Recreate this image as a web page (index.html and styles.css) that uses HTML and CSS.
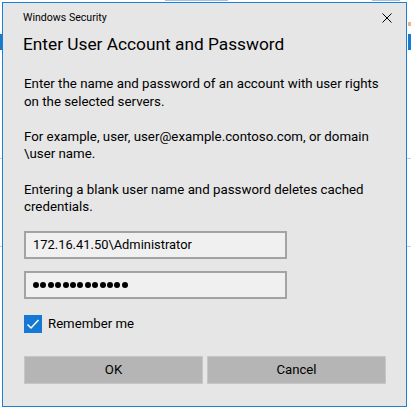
FILE: index.html
```html
<!DOCTYPE html>
<html lang="en">
<head>
    <meta charset="UTF-8">
    <meta name="viewport" content="width=device-width, initial-scale=1.0">
    <title>Windows Security</title>
    <link rel="stylesheet" href="styles.css">
</head>
<body>
    <!-- bits of the window behind the dialog -->
    <div class="backdrop">
        <span class="bg-link bg-link-a"></span>
        <span class="bg-link bg-link-b"></span>
        <span class="bg-block bg-block-left"></span>
        <span class="bg-mark bg-mark-right"></span>
        <span class="bg-block bg-block-right"></span>
        <span class="bg-rule bg-rule-1"></span>
        <span class="bg-rule bg-rule-2"></span>
    </div>

    <div class="dialog">
        <div class="titlebar">
            <span class="titlebar-text">Windows Security</span>
            <button class="close-btn" aria-label="Close">
                <svg width="10" height="10" viewBox="0 0 10 10">
                    <path d="M0.5 0.5 L9.5 9.5 M9.5 0.5 L0.5 9.5" stroke="#000" stroke-width="1" fill="none"/>
                </svg>
            </button>
        </div>

        <div class="dialog-body">
            <h1 class="dialog-title">Enter User Account and Password</h1>

            <p>Enter the name and password of an account with user rights on the selected servers.</p>
            <p>For example, user, user@example.contoso.com, or domain \user name.</p>
            <p class="last">Entering a blank user name and password deletes cached credentials.</p>

            <input class="field" type="text" value="172.16.41.50\Administrator">
            <div class="field password">
                <span class="dot"></span><span class="dot"></span><span class="dot"></span>
                <span class="dot"></span><span class="dot"></span><span class="dot"></span>
                <span class="dot"></span><span class="dot"></span><span class="dot"></span>
                <span class="dot"></span><span class="dot"></span><span class="dot"></span>
                <span class="dot"></span>
            </div>

            <label class="remember">
                <span class="checkbox">
                    <svg width="18" height="18" viewBox="0 0 18 18">
                        <path d="M3.5 9.5 L7 13 L14.5 5" stroke="#fff" stroke-width="1.5" fill="none"/>
                    </svg>
                </span>
                Remember me
            </label>

            <div class="buttons">
                <button class="btn">OK</button>
                <button class="btn">Cancel</button>
            </div>
        </div>
    </div>
</body>
</html>
```
FILE: styles.css
```css
body {
    margin: 0;
    background: #fff;
    font-family: Roboto, "Noto Sans", sans-serif;
    color: #000;
    position: relative;
}

/* background window */
.backdrop span {
    position: absolute;
    display: block;
}

.bg-link {
    top: 0;
    height: 1px;
    background: #9cc3ea;
}

.bg-link-a { left: 165px; width: 63px; }
.bg-link-b { left: 372px; width: 28px; }

.bg-block {
    top: 34px;
    height: 16px;
    background: #1979ca;
}

.bg-block-left { left: 0; width: 2px; }
.bg-block-right { left: 408px; width: 3px; }

.bg-mark-right {
    left: 408px;
    top: 22px;
    width: 3px;
    height: 4px;
    background: #e9b77a;
}

.bg-rule {
    left: 0;
    width: 411px;
    height: 1px;
    background: #cfcfcf;
}

.bg-rule-1 { top: 158px; }
.bg-rule-2 { top: 246px; }

/* dialog */
.dialog {
    position: relative;
    margin: 2px 0 0 2px;
    width: 403px;
    border: 1px solid #1a7fd6;
    background: #e6e6e6;
}

.titlebar {
    display: flex;
    justify-content: space-between;
    align-items: center;
    height: 28px;
    padding: 0 14px 0 20px;
}

.titlebar-text {
    font-size: 10.6px;
}

.close-btn {
    background: none;
    border: none;
    padding: 0;
    width: 10px;
    height: 10px;
    display: flex;
    margin-top: 1px;
}

.dialog-body {
    padding: 0 20px 22px 21px;
}

.dialog-title {
    margin: 1px 0 0 -1px;
    font-size: 17.3px;
    font-weight: normal;
    line-height: 24px;
}

.dialog-body p {
    margin: 0 0 17.6px;
    font-size: 13.3px;
    line-height: 17.6px;
}

.dialog-title + p {
    margin-top: 19px;
}

.dialog-body p.last {
    margin-bottom: 15px;
}

.field {
    display: block;
    box-sizing: border-box;
    width: 263px;
    height: 28px;
    margin: 0 0 12px;
    padding: 0 7px;
    border: 2px solid #a3a3a3;
    background: #f0f0f0;
    font-family: inherit;
    font-size: 12.9px;
    color: #000;
    outline: none;
}

.field.password {
    display: flex;
    align-items: center;
    gap: 1.4px;
    margin-bottom: 0;
    padding-left: 7px;
}

.dot {
    width: 6px;
    height: 6px;
    border-radius: 50%;
    background: #000;
}

.remember {
    display: flex;
    align-items: center;
    gap: 6px;
    margin-top: 16px;
    font-size: 13.2px;
}

.checkbox {
    display: flex;
    width: 18px;
    height: 18px;
    background: #1478d4;
}

.buttons {
    display: grid;
    grid-template-columns: 1fr 1fr;
    gap: 4px;
    margin-top: 23px;
}

.btn {
    height: 28px;
    border: 1px solid #c6c6c6;
    background: #b5b5b5;
    font-family: inherit;
    font-size: 13.2px;
    color: #000;
    padding: 0;
}
```
